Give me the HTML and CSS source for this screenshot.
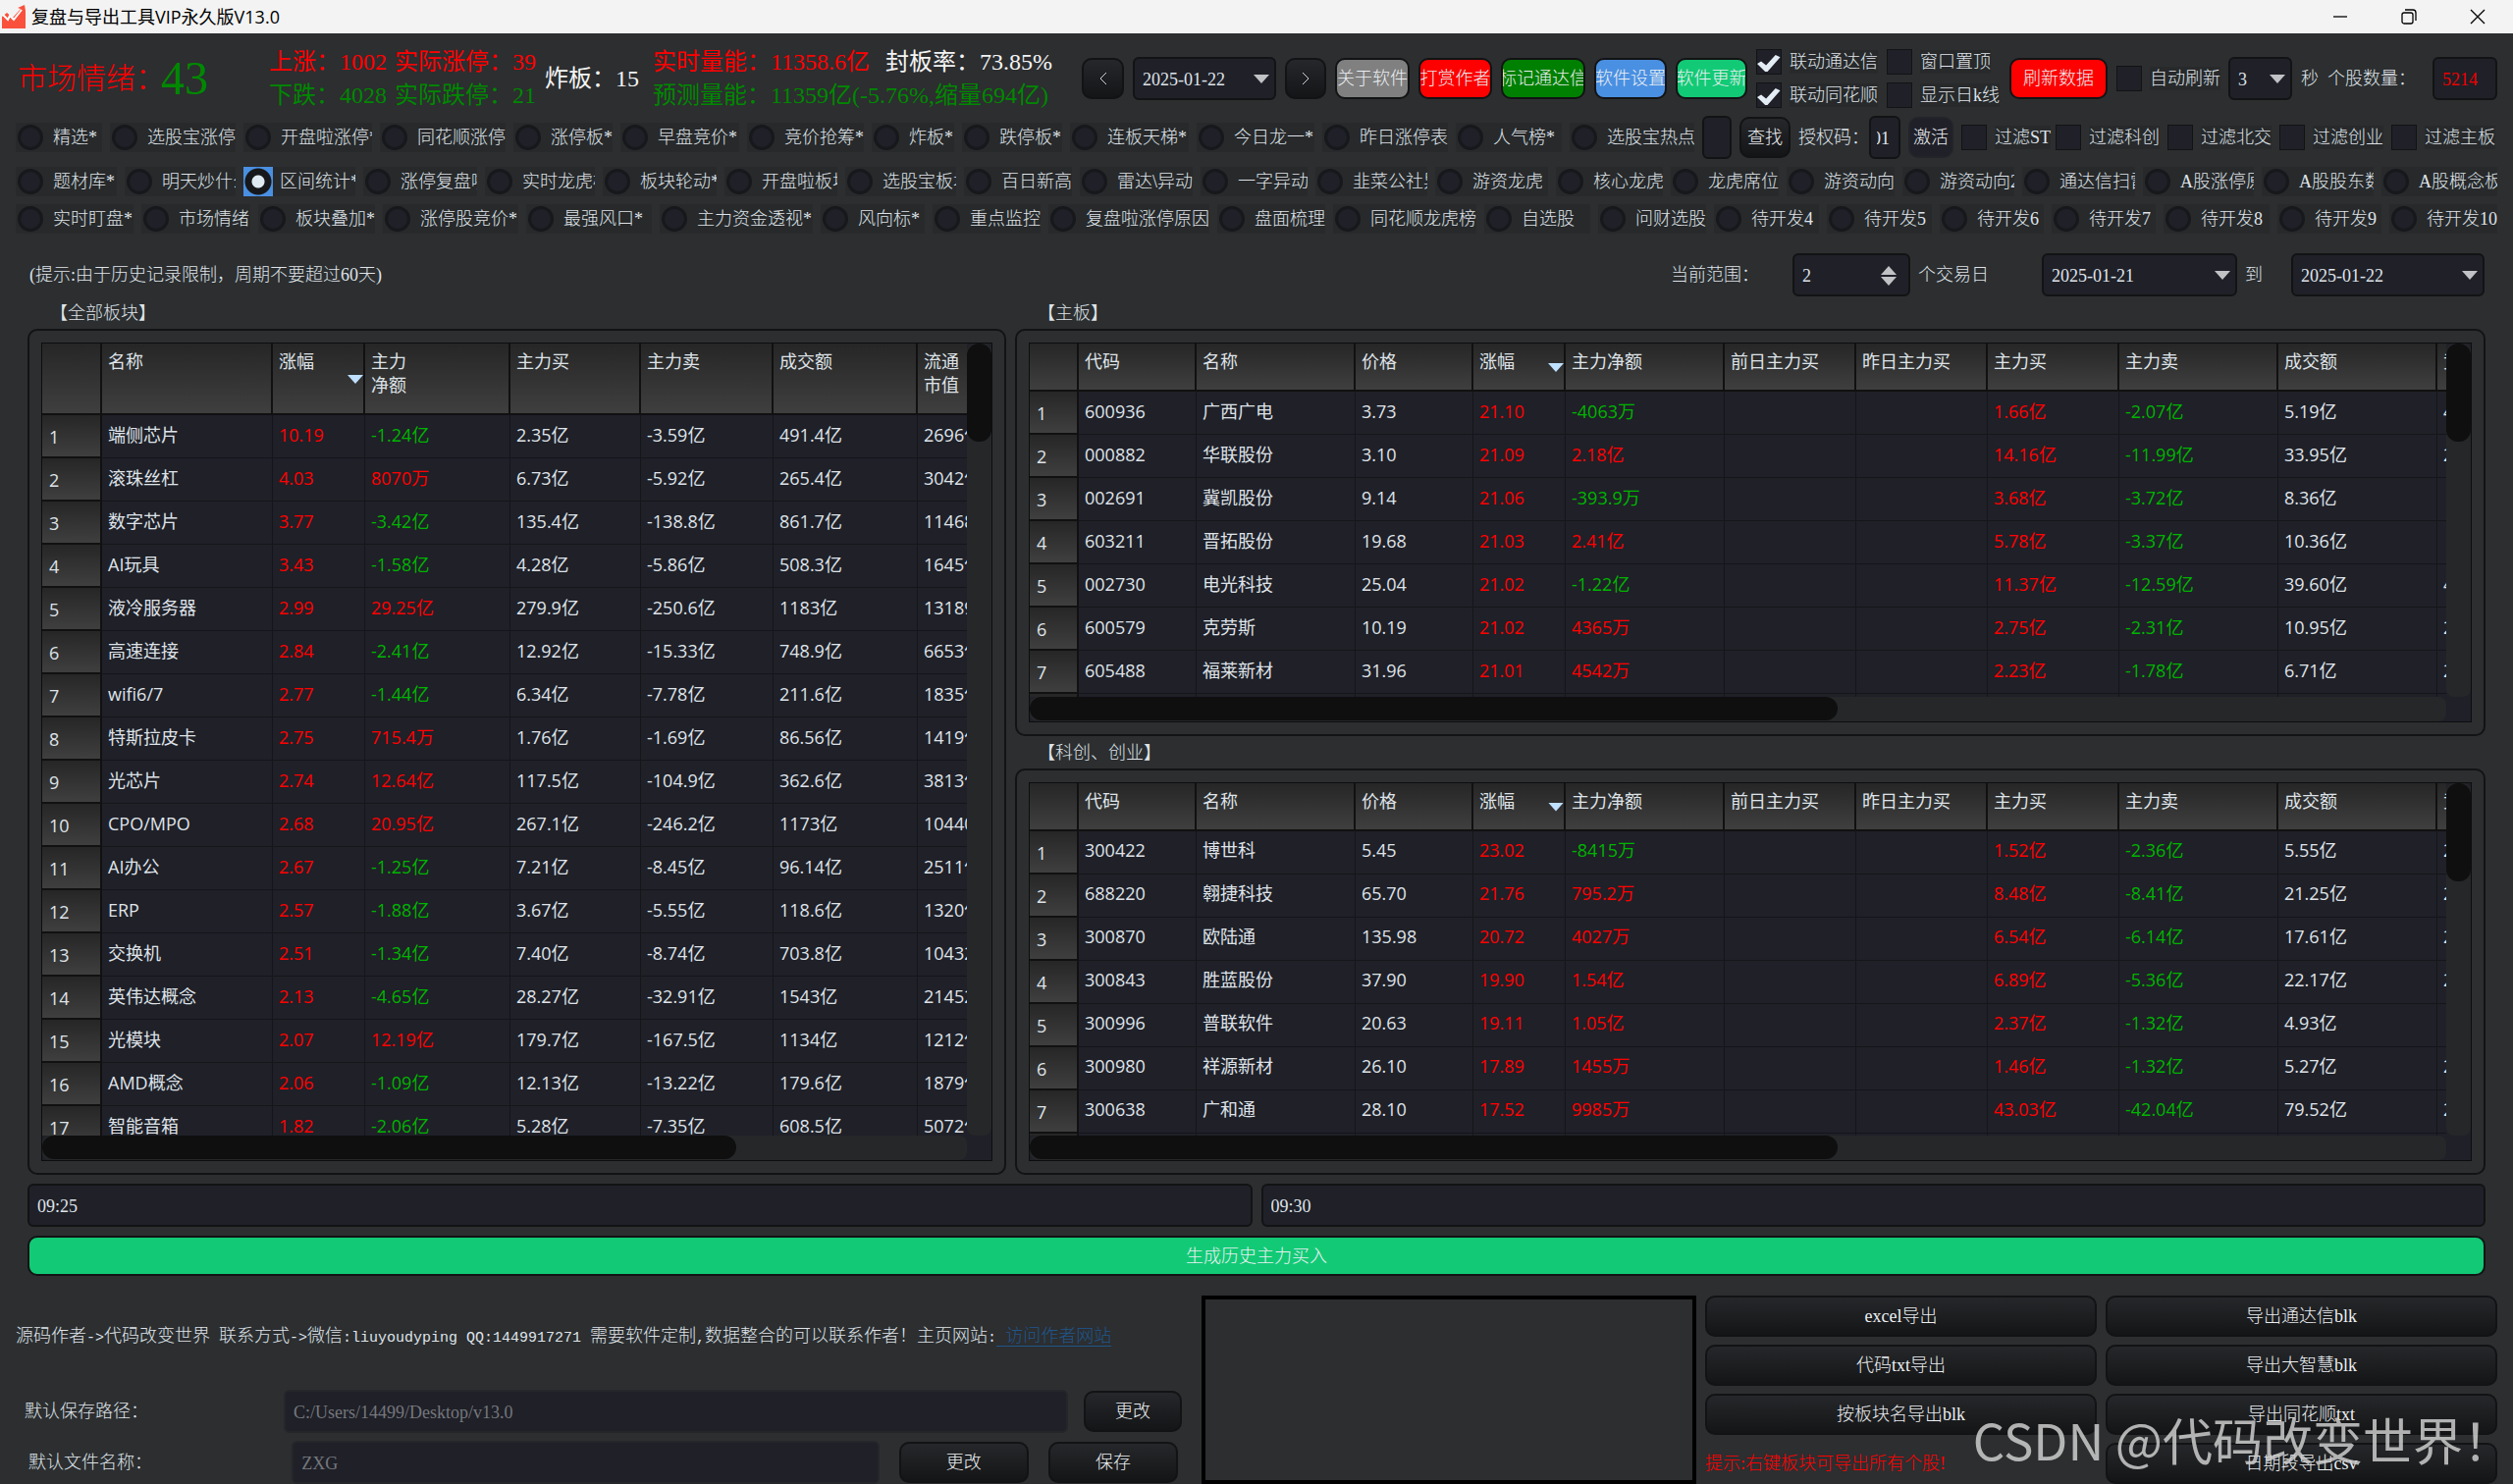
FILE: index.html
```
<!DOCTYPE html>
<html lang="zh-CN">
<head>
  <meta charset="UTF-8" />
  <meta name="viewport" content="width=device-width, initial-scale=1.0" />
  <title>复盘与导出工具VIP永久版V13.0</title>
  <link rel="stylesheet" href="styles.css">
</head>
<body>
  <!-- 标题栏 -->
  <header class="titlebar">
    <svg class="logo" viewBox="0 0 24 24">
      <path d="M0 24V12l5-4 6 5 8-9-3-1 7-3 1 6v18z" fill="#f9513c"/>
      <path d="M1 10l5 5 2-4 4 4 8-10" fill="none" stroke="#fff" stroke-width="2"/>
    </svg>
    <span class="app-name">复盘与导出工具VIP永久版V13.0</span>
    <div class="win-btns">
      <svg viewBox="0 0 16 16"><path d="M1 8h14"/></svg>
      <svg viewBox="0 0 16 16"><rect x="1" y="4" width="11" height="11" rx="2"/><path d="M4 1h8a3 3 0 0 1 3 3v8"/></svg>
      <svg viewBox="0 0 16 16"><path d="M1 1l14 14M15 1L1 15"/></svg>
    </div>
  </header>

  <!-- 行情与工具 -->
  <section class="topbar">
    <div class="mood red">市场情绪：<span class="mood-num green">43</span></div>
    <div class="stat updown">
      <p class="red"><span>上涨：1002</span><span>实际涨停：39</span></p>
      <p class="green"><span>下跌：4028</span><span>实际跌停：21</span></p>
    </div>
    <div class="stat broken">炸板：15</div>
    <div class="stat volume">
      <p><span class="red">实时量能：11358.6亿</span><span>封板率：73.85%</span></p>
      <p class="green">预测量能：11359亿(-5.76%,缩量694亿)</p>
    </div>
    <button class="btn" aria-label="前一天"><svg class="chev" viewBox="0 0 8 16"><path d="M7 2L1 8l6 6"/></svg></button>
    <div class="combo"><select aria-label="日期"><option>2025-01-22</option></select></div>
    <button class="btn" aria-label="后一天"><svg class="chev" viewBox="0 0 8 16"><path d="M1 2l6 6-6 6"/></svg></button>
    <button class="btn gray">关于软件</button>
    <button class="btn bg-red">打赏作者</button>
    <button class="btn bg-green">标记通达信</button>
    <button class="btn blue">软件设置</button>
    <button class="btn mint">软件更新</button>
    <div class="checks">
      <label class="check"><input type="checkbox" checked><span>联动通达信</span></label>
      <label class="check"><input type="checkbox"><span>窗口置顶</span></label>
      <label class="check"><input type="checkbox" checked><span>联动同花顺</span></label>
      <label class="check"><input type="checkbox"><span>显示日k线</span></label>
    </div>
    <button class="btn bg-red">刷新数据</button>
    <label class="check"><input type="checkbox"><span>自动刷新</span></label>
    <div class="combo"><select aria-label="刷新间隔"><option>3</option></select></div>
    <span>秒</span>
    <label for="count">个股数量：</label>
    <input class="field red" id="count" type="text" value="5214">
  </section>

  <section class="tabs row-a" id="rowA">
    <input class="field" type="text" aria-label="查找股票">
    <button class="btn find">查找</button>
    <label for="auth">授权码：</label>
    <input class="field auth" id="auth" type="text" value="01">
    <button class="btn flat">激活</button>
    <label class="check"><input type="checkbox"><span>过滤ST</span></label>
    <label class="check"><input type="checkbox"><span>过滤科创</span></label>
    <label class="check"><input type="checkbox"><span>过滤北交</span></label>
    <label class="check"><input type="checkbox"><span>过滤创业</span></label>
    <label class="check"><input type="checkbox"><span>过滤主板</span></label>
  </section>
  <section class="tabs row-b" id="rowB"></section>
  <section class="tabs row-c" id="rowC"></section>

  <!-- 区间 -->
  <section class="range">
    <span class="hint">(提示:由于历史记录限制，周期不要超过60天)</span>
    <label for="days">当前范围：</label>
    <div class="spin"><input class="field" id="days" type="number" value="2"></div>
    <span>个交易日</span>
    <div class="combo"><select aria-label="开始日期"><option>2025-01-21</option></select></div>
    <span>到</span>
    <div class="combo"><select aria-label="结束日期"><option>2025-01-22</option></select></div>
  </section>

  <main class="boards">
    <div class="col-left">
      <h2>【全部板块】</h2>
      <div class="panel">
        <div class="grid-view">
          <div class="viewport"><table class="sectors" id="sectors"></table></div>
          <div class="vbar"><div class="thumb"></div></div>
          <div class="hbar"><div class="thumb"></div></div>
        </div>
      </div>
    </div>
    <div class="col-right">
      <h2>【主板】</h2>
      <div class="panel">
        <div class="grid-view">
          <div class="viewport"><table class="stocks" id="mainBoard"></table></div>
          <div class="vbar"><div class="thumb"></div></div>
          <div class="hbar"><div class="thumb"></div></div>
        </div>
      </div>
      <h2>【科创、创业】</h2>
      <div class="panel">
        <div class="grid-view">
          <div class="viewport"><table class="stocks" id="growthBoard"></table></div>
          <div class="vbar"><div class="thumb"></div></div>
          <div class="hbar"><div class="thumb"></div></div>
        </div>
      </div>
    </div>
  </main>

  <section class="times">
    <input class="field" type="text" value="09:25" aria-label="开始时间">
    <input class="field" type="text" value="09:30" aria-label="结束时间">
  </section>
  <button class="btn mint generate">生成历史主力买入</button>

  <footer class="bottom">
    <div class="settings">
      <p class="author">源码作者<span class="mono">-&gt;</span>代码改变世界<span class="mono"> </span>联系方式<span class="mono">-&gt;</span>微信<span class="mono">:liuyoudyping QQ:1449917271 </span>需要软件定制<span class="mono">,</span>数据整合的可以联系作者！主页网站<span class="mono">:</span><a href="#"><span class="mono"> </span>访问作者网站</a></p>
      <div class="path-row">
        <label for="path">默认保存路径：</label>
        <input class="field off" id="path" type="text" value="C:/Users/14499/Desktop/v13.0">
        <button class="btn">更改</button>
      </div>
      <div class="name-row">
        <label for="fname">默认文件名称：</label>
        <input class="field off" id="fname" type="text" value="ZXG">
        <button class="btn">更改</button>
        <button class="btn">保存</button>
      </div>
    </div>
    <div class="preview"></div>
    <div class="exports">
      <button class="btn">excel导出</button>
      <button class="btn">导出通达信blk</button>
      <button class="btn">代码txt导出</button>
      <button class="btn">导出大智慧blk</button>
      <button class="btn">按板块名导出blk</button>
      <button class="btn">导出同花顺txt</button>
      <span class="tip red">提示:右键板块可导出所有个股!</span>
      <button class="btn">日期段导出csv</button>
    </div>
  </footer>
  <div class="watermark">CSDN @代码改变世界！</div>

  <script src="app.js"></script>
</body>
</html>
```
FILE: styles.css
```
:root {
  --bg: #2c2e30;
  --panel: #1f2028;
  --line: #121314;
  --text: #dfe3e8;
  --red: #ff0000;
  --green: #008800;
  --song: "Liberation Serif", "Noto Sans CJK SC", serif;
  --hei: "Open Sans", "Noto Sans CJK SC", sans-serif;
}
*, *::before, *::after { box-sizing: border-box; }
body {
  display: flex;
  flex-direction: column;
  height: 100vh;
  margin: 0;
  overflow: hidden;
  background: var(--bg);
  color: var(--text);
  font: 300 18px/24px var(--song);
  white-space: nowrap;
}
p, h2 { margin: 0; }
.red { color: var(--red); }
.green { color: var(--green); }
.mono { font-family: "Liberation Mono", monospace; font-size: 15px; white-space: pre; }

/* 标题栏 */
.titlebar {
  display: flex;
  align-items: center;
  height: 34px;
  padding: 0 28px 0 2px;
  background: #f3f3f3;
  color: #000;
  font-family: var(--hei);
}
.logo { width: 24px; height: 24px; margin-right: 6px; }
.app-name { flex: 1; font-weight: 400; }
.win-btns { display: flex; gap: 54px; }
.win-btns svg { width: 16px; height: 16px; fill: none; stroke: #000; stroke-width: 1.3; }

/* 控件 */
.btn {
  height: 42px;
  padding: 0;
  border: 2px solid var(--line);
  border-radius: 10px;
  background: linear-gradient(#25272a, #141517);
  color: #eceff2;
  font: inherit;
  display: flex;
  align-items: center;
  justify-content: center;
  overflow: hidden;
  white-space: nowrap;
}
.gray { background: #808080; }
.bg-red { background: #ff0000; }
.bg-green { background: #008000; }
.blue { background: #4a90e2; }
.mint { background: #12ca76; }
.flat { background: var(--panel); border-color: #23242a; }
.chev { width: 8px; height: 16px; fill: none; stroke: #cfd3d8; stroke-width: 1; }
.field, .combo select {
  width: 100%;
  min-width: 0;
  height: 44px;
  padding: 2px 8px 0;
  border: 2px solid var(--line);
  border-radius: 6px;
  background: var(--panel);
  color: var(--text);
  font: inherit;
  outline: none;
}
.field.red { color: #e00; }
.combo, .spin { position: relative; min-width: 0; }
.combo select { appearance: none; }
.combo::after, .spin::before, .spin::after {
  content: "";
  position: absolute;
  right: 7px;
  top: 18px;
  width: 16px;
  height: 9px;
  background: #c0c2c5;
  clip-path: polygon(0 0, 100% 0, 50% 100%);
}
.spin::before, .spin::after { right: 14px; top: 24px; }
.spin::before { top: 13px; clip-path: polygon(0 100%, 100% 100%, 50% 0); }
.spin input { appearance: textfield; }
.spin input::-webkit-inner-spin-button { display: none; }
.check, .radio { display: flex; align-items: center; min-width: 0; }
.check input, .radio input {
  appearance: none;
  flex: none;
  width: 26px;
  height: 26px;
  margin: 0 8px 0 0;
  border: 1px solid var(--line);
  background: var(--panel);
}
.check input:checked { position: relative; }
.check input:checked::after {
  content: "";
  position: absolute;
  inset: 4px 0 2px 0;
  background: #e4edf5;
  clip-path: polygon(0 55%, 17% 42%, 38% 64%, 78% 5%, 98% 18%, 44% 100%, 34% 100%);
}
.check span { background: #27292b; }

/* 行情与工具 */
.topbar {
  display: grid;
  grid-template-columns: 247fr 272fr 101fr 428fr 43fr 146fr 42fr 76fr 75fr 86fr 74fr 73fr 249fr 100fr 105fr 65fr 18fr 98fr 66fr;
  gap: 9px;
  align-items: center;
  height: 84px;
  padding: 8px 16px 0 18px;
}
.topbar > * { min-width: 0; }
.mood { font-size: 30px; line-height: 50px; display: flex; align-items: center; }
.mood-num { font-size: 48px; margin-left: -4px; }
.stat { font-size: 24px; line-height: 34px; color: #f4f4f4; font-weight: 400; }
.stat p { display: flex; gap: 8px; }
.stat p.red { color: var(--red); }
.stat p.green { color: var(--green); }
.volume p { gap: 16px; }
.checks { display: grid; grid-template-columns: 125px 1fr; gap: 8px; }

/* 功能选项 */
.tabs { display: grid; gap: 8px; align-items: center; margin: 0 16px 8px; }
.tabs > * { min-width: 0; }
.row-a {
  grid-template-columns: 88fr 128fr 131fr 128fr 101fr 121fr 119fr 84fr 102fr 121fr 120fr 128fr 108fr 127fr 30fr 52fr 64fr 32fr 46fr 88fr 106fr 106fr 106fr 108fr;
}
.row-b {
  grid-template-columns: 103fr 113fr 114fr 116fr 112fr 116fr 115fr 113fr 110fr 115fr 109fr 114fr 115fr 109fr 110fr 110fr 114fr 115fr 113fr 114fr 118fr;
}
.row-c {
  grid-template-columns: 120fr 111fr 119fr 138fr 128fr 156fr 106fr 110fr 164fr 110fr 146fr 108fr 110fr 107fr 107fr 106fr 106fr 108fr 106fr 110fr;
}
.radio { height: 30px; background: #27292b; overflow: hidden; }
.radio input { margin: 0 10px 0 2px; border: 3px solid #17181b; border-radius: 50%; }
.radio input:checked {
  width: 30px;
  height: 30px;
  margin: 0 7px 0 0;
  border: 0;
  border-radius: 0;
  background: radial-gradient(circle, #dfe9f2 6px, #17181b 7px 13px, #4a90e2 14px);
}
.tabs .field { padding: 2px 4px 0; }
.tabs .auth { text-indent: -5px; padding-left: 6px; }

/* 区间 */
.range {
  display: grid;
  grid-template-columns: 1664fr 116fr 120fr 118fr 199fr 39fr 197fr;
  gap: 8px;
  align-items: center;
  margin: 12px 29px 0 30px;
}

/* 表格 */
.boards { flex: 1; min-height: 0; display: grid; grid-template-columns: 997fr 1498fr; gap: 9px; padding: 0 28px; }
.col-left, .col-right { display: flex; flex-direction: column; min-width: 0; min-height: 0; }
.boards h2 { padding: 2px 0 0 23px; font-size: 18px; font-weight: 300; line-height: 31px; }
.panel { flex: 1; min-height: 0; padding: 12px; border: 2px solid var(--line); border-radius: 10px; }
.grid-view {
  display: grid;
  grid-template: minmax(0, 1fr) 25px / minmax(0, 1fr) 25px;
  height: 100%;
  border: 1px solid #0c0d0e;
  background: var(--panel);
}
.viewport { overflow: hidden; }
.vbar, .hbar { background: #252729; border-radius: 8px; }
.vbar .thumb { height: 100px; border-radius: 12px; background: #0f0f0f; }
.hbar .thumb { width: 75%; height: 24px; border-radius: 12px; background: #0f0f0f; }
.col-right .hbar .thumb { width: 57%; }
table { table-layout: fixed; border-collapse: separate; border-spacing: 0; font-family: var(--hei); font-weight: 400; }
.sectors { width: 1040px; }
.stocks { width: 1474px; }
th, td {
  height: 44px;
  padding: 0 0 4px 6px;
  border: solid #15161a;
  border-width: 0 1px 1px 0;
  text-align: left;
  font-weight: 400;
  overflow: hidden;
}
th { position: relative; border-color: #111; border-width: 0 2px 2px 0; background: linear-gradient(#262626, #3f3f3f); }
tbody th { padding: 2px 0 0 7px; }
thead th { height: 49px; padding-top: 6px; vertical-align: top; }
.sectors thead th { height: 73px; }
.sorted::after {
  content: "";
  position: absolute;
  right: 0;
  top: 20px;
  width: 16px;
  height: 9px;
  background: #bfe0ff;
  clip-path: polygon(0 0, 100% 0, 50% 100%);
}
.sectors .sorted::after { top: 32px; }
td.up { color: #f00; }
td.down { color: #00b400; }

/* 时间 */
.times { display: grid; grid-template-columns: 1fr 1fr; gap: 9px; margin: 9px 28px; }
.generate { height: 41px; margin: 0 28px 20px; }

/* 底部 */
.bottom { display: grid; grid-template-columns: 1199fr 504fr 807fr; gap: 9px; height: 192px; padding: 0 16px; }
.bottom > div { min-width: 0; }
.settings { display: grid; grid-template-rows: 88px 44px 44px; row-gap: 8px; }
.author { line-height: 82px; }
.author a { color: #20568c; text-underline-offset: 4px; }
.path-row, .name-row { display: grid; align-items: center; }
.path-row { grid-template-columns: 248fr 799fr 100fr; gap: 16px; padding: 0 11px 0 9px; }
.name-row { grid-template-columns: 248fr 598fr 132fr 132fr; gap: 20px; padding: 0 15px 0 13px; }
.field.off { border-color: #24262a; color: #75777c; }
.preview { border: 4px solid #000; }
.exports { display: grid; grid-template-columns: 1fr 1fr; gap: 8px 9px; align-items: center; }
.exports .btn { min-width: 0; }

.watermark {
  position: absolute;
  right: 0;
  bottom: 10px;
  color: rgba(205, 205, 205, .85);
  font: 400 51px/72px "Noto Sans CJK SC", sans-serif;
}
```
FILE: app.js
```
const rowA = ["精选*", "选股宝涨停", "开盘啦涨停*", "同花顺涨停", "涨停板*", "早盘竞价*", "竞价抢筹*", "炸板*", "跌停板*", "连板天梯*", "今日龙一*", "昨日涨停表", "人气榜*", "选股宝热点"];
const rowB = ["题材库*", "明天炒什么", "区间统计*", "涨停复盘啦", "实时龙虎榜", "板块轮动*", "开盘啦板块", "选股宝板块", "百日新高", "雷达\\异动", "一字异动", "韭菜公社异动", "游资龙虎", "核心龙虎", "龙虎席位", "游资动向", "游资动向2", "通达信扫雷", "A股涨停原因", "A股股东数", "A股概念板块"];
const rowC = ["实时盯盘*", "市场情绪", "板块叠加*", "涨停股竞价*", "最强风口*", "主力资金透视*", "风向标*", "重点监控", "复盘啦涨停原因", "盘面梳理", "同花顺龙虎榜", "自选股", "问财选股", "待开发4", "待开发5", "待开发6", "待开发7", "待开发8", "待开发9", "待开发10"];

function radios(id, names) {
  const html = names.map(n =>
    `<label class="radio"><input type="radio" name="view"${n === "区间统计*" ? " checked" : ""}><span>${n}</span></label>`).join("");
  document.getElementById(id).insertAdjacentHTML("afterbegin", html);
}
radios("rowA", rowA);
radios("rowB", rowB);
radios("rowC", rowC);

const sectors = `端侧芯片 10.19 -1.24亿 2.35亿 -3.59亿 491.4亿 2696亿
滚珠丝杠 4.03 8070万 6.73亿 -5.92亿 265.4亿 3042亿
数字芯片 3.77 -3.42亿 135.4亿 -138.8亿 861.7亿 11468亿
AI玩具 3.43 -1.58亿 4.28亿 -5.86亿 508.3亿 1645亿
液冷服务器 2.99 29.25亿 279.9亿 -250.6亿 1183亿 13189亿
高速连接 2.84 -2.41亿 12.92亿 -15.33亿 748.9亿 6653亿
wifi6/7 2.77 -1.44亿 6.34亿 -7.78亿 211.6亿 1835亿
特斯拉皮卡 2.75 715.4万 1.76亿 -1.69亿 86.56亿 1419亿
光芯片 2.74 12.64亿 117.5亿 -104.9亿 362.6亿 3813亿
CPO/MPO 2.68 20.95亿 267.1亿 -246.2亿 1173亿 10440亿
AI办公 2.67 -1.25亿 7.21亿 -8.45亿 96.14亿 2511亿
ERP 2.57 -1.88亿 3.67亿 -5.55亿 118.6亿 1320亿
交换机 2.51 -1.34亿 7.40亿 -8.74亿 703.8亿 10432亿
英伟达概念 2.13 -4.65亿 28.27亿 -32.91亿 1543亿 21452亿
光模块 2.07 12.19亿 179.7亿 -167.5亿 1134亿 1212亿
AMD概念 2.06 -1.09亿 12.13亿 -13.22亿 179.6亿 1879亿
智能音箱 1.82 -2.06亿 5.28亿 -7.35亿 608.5亿 5072亿`;

// "_" 为空单元格
const mainBoard = `600936 广西广电 3.73 21.10 -4063万 _ _ 1.66亿 -2.07亿 5.19亿 4.1
000882 华联股份 3.10 21.09 2.18亿 _ _ 14.16亿 -11.99亿 33.95亿 2.6
002691 冀凯股份 9.14 21.06 -393.9万 _ _ 3.68亿 -3.72亿 8.36亿 _
603211 晋拓股份 19.68 21.03 2.41亿 _ _ 5.78亿 -3.37亿 10.36亿 _
002730 电光科技 25.04 21.02 -1.22亿 _ _ 11.37亿 -12.59亿 39.60亿 4.8
600579 克劳斯 10.19 21.02 4365万 _ _ 2.75亿 -2.31亿 10.95亿 2.2
605488 福莱新材 31.96 21.01 4542万 _ _ 2.23亿 -1.78亿 6.71亿 2.7
_ _ _ _ _ _ _ _ _ _ _`;

const growthBoard = `300422 博世科 5.45 23.02 -8415万 _ _ 1.52亿 -2.36亿 5.55亿 2.1
688220 翱捷科技 65.70 21.76 795.2万 _ _ 8.48亿 -8.41亿 21.25亿 2.6
300870 欧陆通 135.98 20.72 4027万 _ _ 6.54亿 -6.14亿 17.61亿 2.2
300843 胜蓝股份 37.90 19.90 1.54亿 _ _ 6.89亿 -5.36亿 22.17亿 2.5
300996 普联软件 20.63 19.11 1.05亿 _ _ 2.37亿 -1.32亿 4.93亿 _
300980 祥源新材 26.10 17.89 1455万 _ _ 1.46亿 -1.32亿 5.27亿 2.4
300638 广和通 28.10 17.52 9985万 _ _ 43.03亿 -42.04亿 79.52亿 2.9
_ _ _ _ _ _ _ _ _ _ _`;

function build(id, heads, widths, text, colored) {
  const cols = widths.map(w => `<col style="width:${w}px">`).join("");
  const head = heads.map(h => `<th scope="col"${h === "涨幅" ? ' class="sorted"' : ""}>${h}</th>`).join("");
  const body = text.split("\n").map((line, i) => {
    const tds = line.split(" ").map((v, c) => {
      const cls = colored.includes(c) ? (v[0] === "-" ? "down" : "up") : "";
      return `<td class="${cls}">${v === "_" ? "" : v}</td>`;
    }).join("");
    return `<tr><th scope="row">${i + 1}</th>${tds}</tr>`;
  }).join("");
  document.getElementById(id).innerHTML =
    `<colgroup>${cols}</colgroup><thead><tr><th></th>${head}</tr></thead><tbody>${body}</tbody>`;
}

build("sectors", ["名称", "涨幅", "主力<br>净额", "主力买", "主力卖", "成交额", "流通<br>市值"],
  [61, 174, 94, 148, 133, 135, 147, 148], sectors, [1, 2]);

const stockHeads = ["代码", "名称", "价格", "涨幅", "主力净额", "前日主力买", "昨日主力买", "主力买", "主力卖", "成交额", "竞价"];
const stockWidths = [50, 120, 162, 120, 94, 162, 134, 134, 134, 162, 162, 40];
build("mainBoard", stockHeads, stockWidths, mainBoard, [3, 4, 7, 8]);
build("growthBoard", stockHeads, stockWidths, growthBoard, [3, 4, 7, 8]);
```
